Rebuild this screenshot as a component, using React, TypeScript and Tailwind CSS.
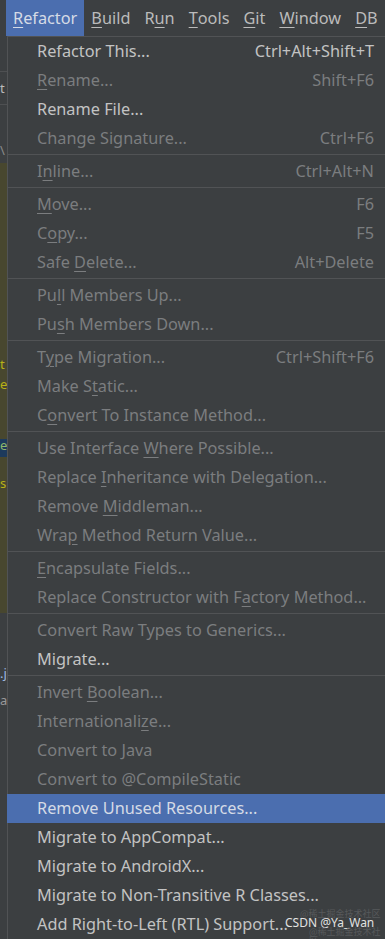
const font = { fontFamily: '"Noto Sans", "Open Sans", sans-serif' };
const cjk = { fontFamily: '"Noto Sans CJK SC", sans-serif' };

type Item =
  | { sep: true }
  | { label: string; key?: number; shortcut?: string; off?: boolean; active?: boolean };

const items: Item[] = [
  { label: "Refactor This...", shortcut: "Ctrl+Alt+Shift+T" },
  { label: "Rename...", key: 0, shortcut: "Shift+F6", off: true },
  { label: "Rename File..." },
  { label: "Change Signature...", shortcut: "Ctrl+F6", off: true },
  { sep: true },
  { label: "Inline...", key: 1, shortcut: "Ctrl+Alt+N", off: true },
  { sep: true },
  { label: "Move...", key: 0, shortcut: "F6", off: true },
  { label: "Copy...", key: 1, shortcut: "F5", off: true },
  { label: "Safe Delete...", key: 5, shortcut: "Alt+Delete", off: true },
  { sep: true },
  { label: "Pull Members Up...", key: 2, off: true },
  { label: "Push Members Down...", key: 2, off: true },
  { sep: true },
  { label: "Type Migration...", key: 1, shortcut: "Ctrl+Shift+F6", off: true },
  { label: "Make Static...", key: 6, off: true },
  { label: "Convert To Instance Method...", key: 1, off: true },
  { sep: true },
  { label: "Use Interface Where Possible...", key: 14, off: true },
  { label: "Replace Inheritance with Delegation...", key: 8, off: true },
  { label: "Remove Middleman...", key: 7, off: true },
  { label: "Wrap Method Return Value...", key: 3, off: true },
  { sep: true },
  { label: "Encapsulate Fields...", key: 0, off: true },
  { label: "Replace Constructor with Factory Method...", key: 26, off: true },
  { sep: true },
  { label: "Convert Raw Types to Generics...", off: true },
  { label: "Migrate..." },
  { sep: true },
  { label: "Invert Boolean...", key: 7, off: true },
  { label: "Internationalize...", key: 14, off: true },
  { label: "Convert to Java", off: true },
  { label: "Convert to @CompileStatic", off: true },
  { label: "Remove Unused Resources...", active: true },
  { label: "Migrate to AppCompat..." },
  { label: "Migrate to AndroidX..." },
  { label: "Migrate to Non-Transitive R Classes..." },
  { label: "Add Right-to-Left (RTL) Support..." },
];

function Mnemonic({ text, at }: { text: string; at?: number }) {
  if (at === undefined) return <>{text}</>;
  return (
    <>
      {text.slice(0, at)}
      <span className="underline underline-offset-[3px]">{text[at]}</span>
      {text.slice(at + 1)}
    </>
  );
}

const menus = [
  { name: "Refactor", key: 0 },
  { name: "Build", key: 0 },
  { name: "Run", key: 1 },
  { name: "Tools", key: 0 },
  { name: "Git", key: 0 },
  { name: "Window", key: 0 },
  { name: "DB", key: 0 },
];

export default function App() {
  return (
    <div className="relative w-[385px] h-[939px] overflow-hidden bg-[#3c3f41] flex flex-col" style={font}>
      {/* menu bar */}
      <div className="h-[36px] flex items-center pl-[6px] bg-[#3c3f41] text-[16.3px] text-[#bbbbbb] whitespace-nowrap">
        {menus.map((m, i) => (
          <div
            key={m.name}
            className={
              i === 0
                ? "h-full flex items-center px-[7px] bg-[#4b6eaf] text-[#d5dbe6]"
                : "h-full flex items-center px-[7px]"
            }
          >
            <Mnemonic text={m.name} at={m.key} />
          </div>
        ))}
      </div>

      <div className="flex flex-1">
        {/* editor behind the popup */}
        <div className="w-[7px] flex flex-col bg-[#3c3f41] text-[13px] leading-none overflow-hidden">
          <div className="h-[36px] border-b border-[#4e5052]" />
          <div className="h-[33px] border-b border-[#4e5052] flex items-center text-[#bbbbbb]">t</div>
          <div className="h-[58px] flex items-end pb-[6px] text-[#8a8a8a]">\</div>
          <div className="h-[450px] bg-[#48472f] flex flex-col text-[#b8b217]">
            <div className="h-[195px]" />
            <div className="h-[20px]">t</div>
            <div className="h-[20px]">e</div>
            <div className="h-[41px]" />
            <div className="h-[18px] bg-[#1d3a5c] text-[#8fb86b]">e</div>
            <div className="h-[20px]" />
            <div className="h-[20px]">s</div>
          </div>
          <div className="h-[67px] flex items-end text-[#9db8e0]">.j</div>
          <div className="h-[40px] flex items-center text-[#999]">a</div>
        </div>

        {/* popup menu */}
        <div className="flex-1 flex flex-col border-l border-t border-[#515355] bg-[#3c3f41] text-[16.3px]">
          {items.map((it, i) =>
            "sep" in it ? (
              <div key={i} className="h-[4px] pt-[1px]">
                <div className="h-[1px] bg-[#515355]" />
              </div>
            ) : (
              <div
                key={i}
                className={
                  "h-[29px] shrink-0 flex items-center justify-between pr-[11px] whitespace-nowrap " +
                  (it.active
                    ? "bg-[#4b6eaf] text-[#d5dbe6] -ml-[1px] pl-[30px]"
                    : it.off
                    ? "text-[#7b7d7f] pl-[29px]"
                    : "text-[#c3c3c3] pl-[29px]")
                }
              >
                <span>
                  <Mnemonic text={it.label} at={it.key} />
                </span>
                {it.shortcut && <span>{it.shortcut}</span>}
              </div>
            )
          )}
        </div>
      </div>

      {/* watermark */}
      <span className="absolute left-[300px] top-[909px] text-[9px] leading-none text-[#57595b]" style={cjk}>@稀土掘金技术社区</span>
      <span className="absolute left-[285px] top-[917px] text-[12px] leading-none text-[#e2e2e2]" style={font}>CSDN @Ya_Wan</span>
      <span className="absolute left-[309px] top-[927px] text-[9px] leading-none text-[#57595b]" style={cjk}>@稀土掘金技术社区</span>
    </div>
  );
}
